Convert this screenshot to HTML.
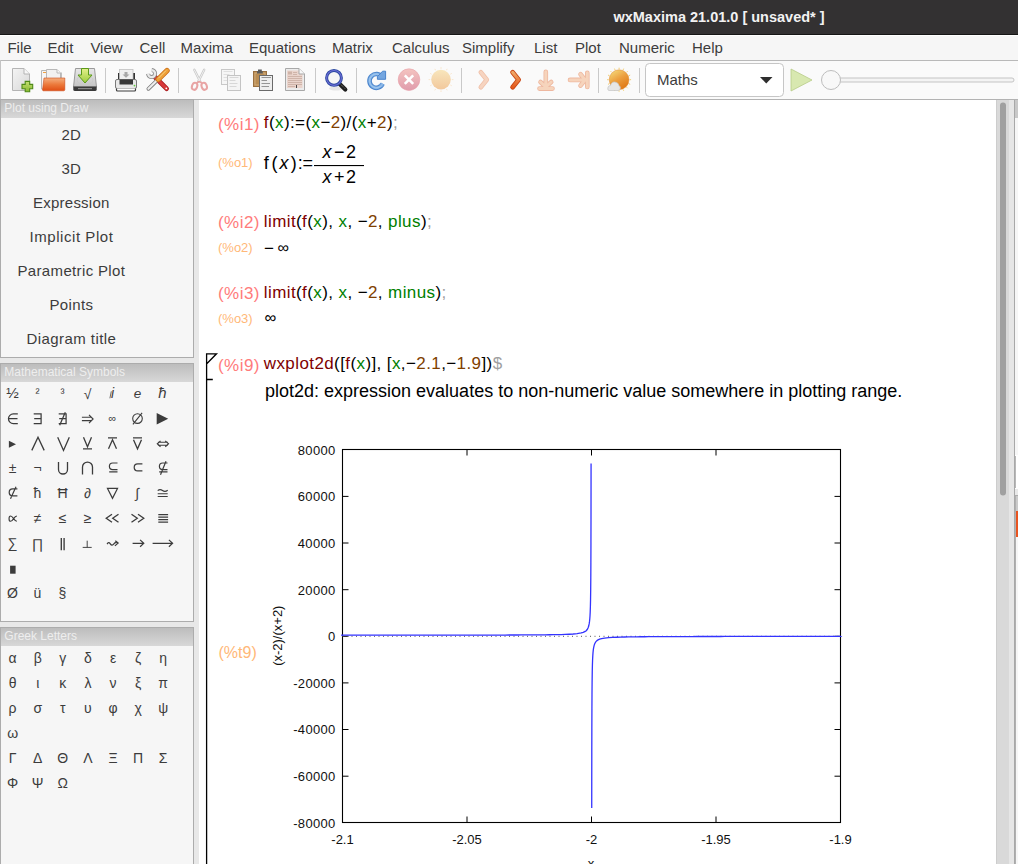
<!DOCTYPE html>
<html><head><meta charset="utf-8"><title>wxMaxima</title>
<style>html,body{margin:0;padding:0;width:1018px;height:864px;overflow:hidden;background:#f6f6f6}svg{display:block}</style>
</head><body><svg width="1018" height="864" viewBox="0 0 1018 864">
<rect x="0" y="0" width="1018" height="864" fill="#f6f6f6"/>
<rect x="0" y="0" width="1018" height="34" fill="#333132"/>
<rect x="0" y="34" width="1018" height="1" fill="#161616"/>
<rect x="0" y="35" width="1018" height="1" fill="#ffffff"/>
<text x="719" y="22" text-anchor="middle" style="font-family:'Liberation Sans',sans-serif;font-size:14.5px;font-weight:bold" fill="#f2f2f2">wxMaxima 21.01.0 [ unsaved* ]</text>
<text x="7.4" y="53" style="font-family:'Liberation Sans',sans-serif;font-size:15px" fill="#3c3c3c">File</text>
<text x="47.5" y="53" style="font-family:'Liberation Sans',sans-serif;font-size:15px" fill="#3c3c3c">Edit</text>
<text x="90.4" y="53" style="font-family:'Liberation Sans',sans-serif;font-size:15px" fill="#3c3c3c">View</text>
<text x="139.5" y="53" style="font-family:'Liberation Sans',sans-serif;font-size:15px" fill="#3c3c3c">Cell</text>
<text x="180.4" y="53" style="font-family:'Liberation Sans',sans-serif;font-size:15px" fill="#3c3c3c">Maxima</text>
<text x="249.0" y="53" style="font-family:'Liberation Sans',sans-serif;font-size:15px" fill="#3c3c3c">Equations</text>
<text x="332.0" y="53" style="font-family:'Liberation Sans',sans-serif;font-size:15px" fill="#3c3c3c">Matrix</text>
<text x="392.0" y="53" style="font-family:'Liberation Sans',sans-serif;font-size:15px" fill="#3c3c3c">Calculus</text>
<text x="462.0" y="53" style="font-family:'Liberation Sans',sans-serif;font-size:15px" fill="#3c3c3c">Simplify</text>
<text x="534.0" y="53" style="font-family:'Liberation Sans',sans-serif;font-size:15px" fill="#3c3c3c">List</text>
<text x="575.0" y="53" style="font-family:'Liberation Sans',sans-serif;font-size:15px" fill="#3c3c3c">Plot</text>
<text x="619.0" y="53" style="font-family:'Liberation Sans',sans-serif;font-size:15px" fill="#3c3c3c">Numeric</text>
<text x="692.0" y="53" style="font-family:'Liberation Sans',sans-serif;font-size:15px" fill="#3c3c3c">Help</text>
<rect x="0" y="60" width="1018" height="1" fill="#b9b9b9"/>
<rect x="1" y="61" width="1017" height="38" fill="#fafafa"/>
<rect x="0" y="60" width="1" height="40" fill="#c4c4c4"/>
<rect x="0" y="99" width="1018" height="1" fill="#b3b3b3"/>
<rect x="105" y="68" width="1" height="25" fill="#c9c9c9"/>
<rect x="178" y="68" width="1" height="25" fill="#c9c9c9"/>
<rect x="315" y="68" width="1" height="25" fill="#c9c9c9"/>
<rect x="356" y="68" width="1" height="25" fill="#c9c9c9"/>
<rect x="461" y="68" width="1" height="25" fill="#c9c9c9"/>
<rect x="598" y="68" width="1" height="25" fill="#c9c9c9"/>
<rect x="639" y="68" width="1" height="25" fill="#c9c9c9"/>
<defs>
<linearGradient id="pg" x1="0" y1="0" x2="1" y2="1"><stop offset="0" stop-color="#f4f4f4"/><stop offset="1" stop-color="#d8d8d8"/></linearGradient>
<linearGradient id="plusg" x1="0" y1="0" x2="0" y2="1"><stop offset="0" stop-color="#c4e070"/><stop offset="1" stop-color="#88b830"/></linearGradient>
<linearGradient id="fold" x1="0" y1="0" x2="0" y2="1"><stop offset="0" stop-color="#f4b080"/><stop offset="0.5" stop-color="#ec7a3c"/><stop offset="1" stop-color="#e04e14"/></linearGradient>
<linearGradient id="drv" x1="0" y1="0" x2="0" y2="1"><stop offset="0" stop-color="#e8e8e8"/><stop offset="1" stop-color="#c4c4c4"/></linearGradient>
<linearGradient id="arrg" x1="0" y1="0" x2="0" y2="1"><stop offset="0" stop-color="#e4f08c"/><stop offset="1" stop-color="#9ccc3c"/></linearGradient>
<linearGradient id="xg" x1="0" y1="0" x2="0" y2="1"><stop offset="0" stop-color="#f4c4c0"/><stop offset="1" stop-color="#e09cac"/></linearGradient>
<linearGradient id="sung" x1="0" y1="0" x2="0" y2="1"><stop offset="0" stop-color="#f8e6bc"/><stop offset="1" stop-color="#f2c89c"/></linearGradient>
<linearGradient id="sun2" x1="0.2" y1="0" x2="0.8" y2="1"><stop offset="0" stop-color="#f4d878"/><stop offset="0.45" stop-color="#eca040"/><stop offset="1" stop-color="#de7410"/></linearGradient>
<linearGradient id="chev2" x1="0" y1="0" x2="0" y2="1"><stop offset="0" stop-color="#f0a868"/><stop offset="1" stop-color="#e45a1c"/></linearGradient>
<linearGradient id="refg" x1="0" y1="0" x2="1" y2="1"><stop offset="0" stop-color="#78b0e8"/><stop offset="1" stop-color="#3c7cc8"/></linearGradient>
</defs>
<path d="M12.5 68.5 H24 L29.5 74 V90.5 H12.5 Z" fill="url(#pg)" stroke="#b4b4b4" stroke-width="1"/>
<path d="M24 68.5 V74 H29.5" fill="#f8f8f8" stroke="#b4b4b4" stroke-width="1"/>
<path d="M25.2 81.4 h4.5 v3 h3 v4.3 h-3 v3 h-4.5 v-3 h-3.2 v-4.3 h3.2 Z" fill="url(#plusg)" stroke="#4f8a18" stroke-width="1.1"/>
<path d="M41.5 70.5 H50 V89 H41.5 Z" fill="#f6f6f6" stroke="#b8b8b8" stroke-width="1"/>
<rect x="43" y="72" width="3" height="1" fill="#f0a040"/>
<path d="M46.5 69.5 H57 L60.5 73 V84 H46.5 Z" fill="#f2f2f2" stroke="#b8b8b8" stroke-width="1"/>
<path d="M57 69.5 V73 H60.5" fill="#fafafa" stroke="#b8b8b8" stroke-width="1"/>
<path d="M61 72.5 H62 V78 H61 Z" fill="#c0c0c0"/>
<path d="M44 78 H64.8 V89.5 Q64.8 90.8 63.5 90.8 H43 L42.5 90 Z" fill="url(#fold)" stroke="#cc4a18" stroke-width="0.6"/>
<path d="M75.5 68.5 H94.5 L96.5 87 H73.5 Z" fill="url(#drv)" stroke="#9a9a9a" stroke-width="1"/>
<ellipse cx="85" cy="80" rx="8" ry="5" fill="none" stroke="#c8c8c8" stroke-width="0.8"/>
<path d="M73.3 86.5 H96.7 V89.5 Q96.7 91 95 91 H75 Q73.3 91 73.3 89.5 Z" fill="#3a3a3a"/>
<rect x="78" y="88" width="14" height="1.2" fill="#888"/>
<path d="M81.5 68.5 H88.5 V75 H92 L85 83 L78 75 H81.5 Z" fill="url(#arrg)" stroke="#5a9a18" stroke-width="1"/>
<rect x="118" y="73" width="17" height="7" fill="#333"/>
<rect x="119.5" y="69.5" width="13.5" height="10" fill="#f0f0f0" stroke="#c0c0c0" stroke-width="0.8"/>
<path d="M124.5 72 h3 v2.5 h2 l-3.5 3.3 l-3.5 -3.3 h2 Z" fill="#a8a8a8"/>
<rect x="115.5" y="79.5" width="21" height="9" rx="1.5" fill="#e8e8e8" stroke="#7a7a7a" stroke-width="1"/>
<rect x="119.5" y="79.5" width="13.5" height="5" fill="#383838"/>
<circle cx="134.5" cy="85.6" r="0.9" fill="#60d040"/>
<path d="M116.5 88.5 V90 Q116.5 91 117.5 91 H134.5 Q135.5 91 135.5 90 V88.5" fill="#fff" stroke="#3a3a3a" stroke-width="1.2"/>
<path d="M155.2 77.3 L166.6 88.6" stroke="#a81c20" stroke-width="4.8" stroke-linecap="round"/>
<path d="M155.2 77.3 L166.6 88.6" stroke="#d8383a" stroke-width="3.2" stroke-linecap="round"/>
<circle cx="166.3" cy="88.3" r="0.9" fill="#fff"/>
<path d="M151.8 70.1 A3.5 3.5 0 1 1 148.1 73.8" fill="none" stroke="#8c8c8c" stroke-width="4.0" stroke-linecap="butt"/>
<path d="M151.8 70.1 A3.5 3.5 0 1 1 148.1 73.8" fill="none" stroke="#eaeaea" stroke-width="2.3" stroke-linecap="butt"/>
<path d="M157.6 79.8 L148.4 88.8" stroke="#7c7c7c" stroke-width="3.8" stroke-linecap="round"/>
<path d="M157.6 79.8 L148.4 88.8" stroke="#eeeeee" stroke-width="2.2" stroke-linecap="round"/>
<path d="M167 70.6 L158.2 79.4" stroke="#c86c18" stroke-width="5.4" stroke-linecap="round"/>
<path d="M167 70.6 L158.2 79.4" stroke="#eea038" stroke-width="3.8" stroke-linecap="round"/>
<path d="M165.8 70.8 L158.6 78" stroke="#f6d488" stroke-width="1" stroke-linecap="round"/>
<path d="M194.3 69.8 L200.2 81.5 M204.2 69.8 L198.3 81.5" stroke="#c8c8c8" stroke-width="2.4" stroke-linecap="round"/>
<path d="M194.3 69.8 L200.2 81.5 M204.2 69.8 L198.3 81.5" stroke="#f2f2f2" stroke-width="1" stroke-linecap="round"/>
<ellipse cx="194.6" cy="86.3" rx="2.6" ry="3.6" transform="rotate(20 194.6 86.3)" fill="none" stroke="#e8a4a4" stroke-width="2"/>
<ellipse cx="204.2" cy="86.3" rx="2.6" ry="3.6" transform="rotate(-20 204.2 86.3)" fill="none" stroke="#e8a4a4" stroke-width="2"/>
<path d="M199.2 81.5 L196.5 83 M199.2 81.5 L202 83" stroke="#e8a4a4" stroke-width="1.6"/>
<rect x="221.5" y="69.5" width="13" height="15" fill="#f6f6f6" stroke="#c8c8c8" stroke-width="1"/>
<path d="M223.5 71.5 h9 M223.5 74.5 h6 M223.5 77.5 h6 M223.5 80.5 h6" stroke="#dcdcdc" stroke-width="0.9"/>
<rect x="227.5" y="75.5" width="13" height="15" fill="#f4f4f4" stroke="#c4c4c4" stroke-width="1"/>
<path d="M229.5 77.5 h9 M229.5 80.5 h6 M229.5 83.5 h8 M229.5 86.5 h7" stroke="#d4d4d4" stroke-width="0.9"/>
<rect x="253.5" y="71.5" width="13" height="15" fill="#b98c52" stroke="#9a7040" stroke-width="1"/>
<rect x="255" y="73" width="10" height="12" fill="none" stroke="#d2b080" stroke-width="0.8"/>
<path d="M258 69.5 h3.8 v1.8 h1 v2.3 h-5.8 v-2.3 h1 Z" fill="#5a5a5a"/>
<rect x="259.5" y="75.5" width="13" height="15" fill="#eeeeee" stroke="#6a6a6a" stroke-width="1"/>
<path d="M261.5 77.5 h9.5 M261.5 80.5 h5.5 M261.5 83.5 h8.5 M261.5 86.5 h7.5" stroke="#8a8a8a" stroke-width="0.9"/>
<path d="M285.5 68.5 H299 L304.5 74 V90.5 H285.5 Z" fill="#ececec" stroke="#a8a8a8" stroke-width="1"/>
<path d="M287 70.5 H299 V74 H302.5 V88 H287 Z" fill="#ead4cc"/>
<path d="M299 68.5 V74 H304.5" fill="#f8f8f8" stroke="#a8a8a8" stroke-width="1"/>
<rect x="288" y="71.5" width="4" height="3" fill="#d0b4a8"/>
<path d="M293 72.5 h4 M293 74.5 h4 M288 76.5 h14 M288 78.5 h14 M288 80.5 h14 M288 82.5 h14 M288 84.5 h14 M288 86.5 h7" stroke="#c8aca0" stroke-width="0.8"/>
<rect x="296" y="85" width="1" height="3" fill="#444"/>
<ellipse cx="336" cy="88.5" rx="7" ry="2" fill="#000" opacity="0.08"/>
<path d="M339.2 83.6 L345.3 89.6" stroke="#1e1e1e" stroke-width="4.2" stroke-linecap="round"/>
<path d="M340 83.6 L345 88.6" stroke="#8a8a80" stroke-width="1" stroke-dasharray="1 1"/>
<circle cx="334" cy="77.9" r="6" fill="#f6f6f6"/>
<circle cx="334" cy="77.9" r="7.4" fill="none" stroke="#2a48a0" stroke-width="3"/>
<circle cx="334" cy="77.9" r="7.4" fill="none" stroke="#6c6cd4" stroke-width="1.2"/>
<path d="M382.05 76.94 A6.9 6.9 0 1 0 382.65 83.82" fill="none" stroke="#4a84cc" stroke-width="4.6"/>
<path d="M382.05 76.94 A6.9 6.9 0 1 0 382.65 83.82" fill="none" stroke="#86b6e8" stroke-width="2.6"/>
<path d="M382.05 76.94 A6.9 6.9 0 1 0 382.65 83.82" fill="none" stroke="#a8ccf0" stroke-width="0.8"/>
<path d="M382.65 83.82 A6.9 6.9 0 0 0 380.84 86.19" fill="none" stroke="#80b0e4" stroke-width="4.4" opacity="0.45"/>
<path d="M382.6 71.2 L385.6 71.2 L385.6 79.3 L377.4 79.3 L377.4 76.6 Z" fill="#74a6e0" stroke="#4a84cc" stroke-width="1" stroke-linejoin="round"/>
<circle cx="409" cy="79.6" r="10.8" fill="url(#xg)" stroke="#e8a0a8" stroke-width="0.6"/>
<path d="M404.8 75.4 L413.2 83.8 M413.2 75.4 L404.8 83.8" stroke="#ffffff" stroke-width="2.6"/>
<g stroke="#f8e0c0" stroke-width="0.8"><path d="M441 79.6 m10.80 0.00 l1.60 0.00"/><path d="M441 79.6 m9.35 5.40 l1.39 0.80"/><path d="M441 79.6 m5.40 9.35 l0.80 1.39"/><path d="M441 79.6 m0.00 10.80 l0.00 1.60"/><path d="M441 79.6 m-5.40 9.35 l-0.80 1.39"/><path d="M441 79.6 m-9.35 5.40 l-1.39 0.80"/><path d="M441 79.6 m-10.80 0.00 l-1.60 0.00"/><path d="M441 79.6 m-9.35 -5.40 l-1.39 -0.80"/><path d="M441 79.6 m-5.40 -9.35 l-0.80 -1.39"/><path d="M441 79.6 m-0.00 -10.80 l-0.00 -1.60"/><path d="M441 79.6 m5.40 -9.35 l0.80 -1.39"/><path d="M441 79.6 m9.35 -5.40 l1.39 -0.80"/></g>
<circle cx="441" cy="79.6" r="9.8" fill="url(#sung)"/>
<path d="M480.8 72.3 L486.8 79.7 L480.8 87.2" fill="none" stroke="#f0c0a8" stroke-width="4.6" stroke-linecap="round" stroke-linejoin="round"/>
<path d="M480.8 72.3 L486.8 79.7 L480.8 87.2" fill="none" stroke="#f6d4c0" stroke-width="3" stroke-linecap="round" stroke-linejoin="round"/>
<path d="M512.6 72.3 L518.6 79.7 L512.6 87.2" fill="none" stroke="#c84412" stroke-width="4.8" stroke-linecap="round" stroke-linejoin="round"/>
<path d="M512.6 72.3 L518.6 79.7 L512.6 87.2" fill="none" stroke="url(#chev2)" stroke-width="3" stroke-linecap="round" stroke-linejoin="round"/>
<path d="M545.8 71.8 V86.5 M540.5 82 L545.8 87 L551.2 82 M539.5 88.6 H552.5" fill="none" stroke="#eeb8a0" stroke-width="4.6" stroke-linecap="round" stroke-linejoin="round"/>
<path d="M545.8 71.8 V86.5 M540.5 82 L545.8 87 L551.2 82 M539.5 88.6 H552.5" fill="none" stroke="#f6d4bc" stroke-width="3" stroke-linecap="round" stroke-linejoin="round"/>
<path d="M570 79.9 H584 M580.5 74.2 L585 79.9 L580.5 85.6 M587.3 72.8 V87" fill="none" stroke="#eeb8a0" stroke-width="4.6" stroke-linecap="round" stroke-linejoin="round"/>
<path d="M570 79.9 H584 M580.5 74.2 L585 79.9 L580.5 85.6 M587.3 72.8 V87" fill="none" stroke="#f6d4bc" stroke-width="3" stroke-linecap="round" stroke-linejoin="round"/>
<g stroke="#f0c860" stroke-width="0.9"><path d="M619.1 79.7 m10.60 0.00 l1.40 0.00"/><path d="M619.1 79.7 m9.79 4.06 l1.29 0.54"/><path d="M619.1 79.7 m7.50 7.50 l0.99 0.99"/><path d="M619.1 79.7 m4.06 9.79 l0.54 1.29"/><path d="M619.1 79.7 m0.00 10.60 l0.00 1.40"/><path d="M619.1 79.7 m-4.06 9.79 l-0.54 1.29"/><path d="M619.1 79.7 m-7.50 7.50 l-0.99 0.99"/><path d="M619.1 79.7 m-9.79 4.06 l-1.29 0.54"/><path d="M619.1 79.7 m-10.60 0.00 l-1.40 0.00"/><path d="M619.1 79.7 m-9.79 -4.06 l-1.29 -0.54"/><path d="M619.1 79.7 m-7.50 -7.50 l-0.99 -0.99"/><path d="M619.1 79.7 m-4.06 -9.79 l-0.54 -1.29"/><path d="M619.1 79.7 m-0.00 -10.60 l-0.00 -1.40"/><path d="M619.1 79.7 m4.06 -9.79 l0.54 -1.29"/><path d="M619.1 79.7 m7.50 -7.50 l0.99 -0.99"/><path d="M619.1 79.7 m9.79 -4.06 l1.29 -0.54"/></g>
<circle cx="619.1" cy="79.7" r="9.9" fill="url(#sun2)" stroke="#e08a30" stroke-width="0.5"/>
<path d="M609 90.5 Q607.5 90.5 607.8 88 Q608 85.5 610.5 85.5 Q611.5 81.5 615 82 Q618.5 82.5 619 85.5 Q621 86.5 620.2 89 Q619.8 90.5 618 90.5 Z" fill="#e6e6e6" stroke="#c4c4c4" stroke-width="0.7"/>
<rect x="645.5" y="63.5" width="138" height="33" rx="4" fill="#ffffff" stroke="#c6c6c6"/>
<text x="657" y="85" style="font-family:'Liberation Sans',sans-serif;font-size:15px" fill="#3c3c3c">Maths</text>
<path d="M760 77 L772.5 77 L766.25 83.5 Z" fill="#2e2e2e"/>
<path d="M791 69 L812 80 L791 91 Z" fill="#d8e8b0" stroke="#b8cc88" stroke-width="0.8"/>
<rect x="838" y="78" width="176" height="4" rx="2" fill="#f4f4f4" stroke="#c4c4c4" stroke-width="1"/>
<circle cx="831" cy="80" r="9.5" fill="#f8f8f8" stroke="#bdbdbd" stroke-width="1"/>
<rect x="0" y="100" width="199" height="764" fill="#e8e8e8"/>
<rect x="0.5" y="99.5" width="193" height="258" fill="#f6f6f6" stroke="#acacac" stroke-width="1"/>
<defs><linearGradient id="g99" x1="0" y1="0" x2="0" y2="1"><stop offset="0" stop-color="#bdbdbd"/><stop offset="1" stop-color="#d8d8d8"/></linearGradient></defs>
<rect x="1" y="100" width="192" height="18" fill="url(#g99)"/>
<text x="4.3" y="111.8" style="font-family:'Liberation Sans',sans-serif;font-size:12px" fill="#eeeeee">Plot using Draw</text>
<rect x="0.5" y="363.5" width="193" height="258" fill="#f6f6f6" stroke="#acacac" stroke-width="1"/>
<defs><linearGradient id="g363" x1="0" y1="0" x2="0" y2="1"><stop offset="0" stop-color="#bdbdbd"/><stop offset="1" stop-color="#d8d8d8"/></linearGradient></defs>
<rect x="1" y="364" width="192" height="18" fill="url(#g363)"/>
<text x="4.3" y="375.8" style="font-family:'Liberation Sans',sans-serif;font-size:12px" fill="#eeeeee">Mathematical Symbols</text>
<rect x="0.5" y="627.5" width="193" height="273" fill="#f6f6f6" stroke="#acacac" stroke-width="1"/>
<defs><linearGradient id="g627" x1="0" y1="0" x2="0" y2="1"><stop offset="0" stop-color="#bdbdbd"/><stop offset="1" stop-color="#d8d8d8"/></linearGradient></defs>
<rect x="1" y="628" width="192" height="18" fill="url(#g627)"/>
<text x="4.3" y="639.8" style="font-family:'Liberation Sans',sans-serif;font-size:12px" fill="#eeeeee">Greek Letters</text>
<text x="71.30" y="139.7" text-anchor="middle" style="font-family:'Liberation Sans',sans-serif;font-size:15px;letter-spacing:0.2px" fill="#3c3c3c">2D</text>
<text x="71.30" y="173.7" text-anchor="middle" style="font-family:'Liberation Sans',sans-serif;font-size:15px;letter-spacing:0.2px" fill="#3c3c3c">3D</text>
<text x="71.31" y="207.7" text-anchor="middle" style="font-family:'Liberation Sans',sans-serif;font-size:15px;letter-spacing:0.23px" fill="#3c3c3c">Expression</text>
<text x="71.48" y="241.7" text-anchor="middle" style="font-family:'Liberation Sans',sans-serif;font-size:15px;letter-spacing:0.55px" fill="#3c3c3c">Implicit Plot</text>
<text x="71.38" y="275.7" text-anchor="middle" style="font-family:'Liberation Sans',sans-serif;font-size:15px;letter-spacing:0.35px" fill="#3c3c3c">Parametric Plot</text>
<text x="71.38" y="309.7" text-anchor="middle" style="font-family:'Liberation Sans',sans-serif;font-size:15px;letter-spacing:0.35px" fill="#3c3c3c">Points</text>
<text x="71.41" y="343.7" text-anchor="middle" style="font-family:'Liberation Sans',sans-serif;font-size:15px;letter-spacing:0.42px" fill="#3c3c3c">Diagram title</text>
<text x="12.5" y="398.3" text-anchor="middle" style="font-family:'Liberation Sans',sans-serif;font-size:15px;" fill="#3c3c3c">½</text>
<text x="37.5" y="397.3" text-anchor="middle" style="font-family:'Liberation Sans',sans-serif;font-size:12px;" fill="#3c3c3c">²</text>
<text x="62.5" y="397.3" text-anchor="middle" style="font-family:'Liberation Sans',sans-serif;font-size:12px;" fill="#3c3c3c">³</text>
<text x="87.5" y="398.8" text-anchor="middle" style="font-family:'Liberation Sans',sans-serif;font-size:14px;" fill="#3c3c3c">√</text>
<text x="112.5" y="398.3" text-anchor="middle" style="font-family:'Liberation Sans',sans-serif;font-size:14px;font-style:italic" fill="#3c3c3c">i</text>
<path transform="translate(112.5 393.3)" d="M-1.2 -2 L-2.6 5" fill="none" stroke="#3c3c3c" stroke-width="0.75" stroke-linecap="butt" stroke-linejoin="miter"/>
<text x="137.5" y="398.1" text-anchor="middle" style="font-family:'Liberation Sans',sans-serif;font-size:13.5px;font-style:italic" fill="#3c3c3c">e</text>
<text x="162.5" y="398.3" text-anchor="middle" style="font-family:'Liberation Sans',sans-serif;font-size:15px;font-style:italic" fill="#3c3c3c">ħ</text>
<path transform="translate(12.5 418.3)" d="M5.3 -4.4 H0.8 A4.85 4.85 0 0 0 0.8 5.3 H5.3 M-4.3 0.45 H5" fill="none" stroke="#3c3c3c" stroke-width="1.25" stroke-linecap="butt" stroke-linejoin="miter"/>
<path transform="translate(37.5 418.3)" d="M-3.8 -4.4 H3.6 V5.3 H-3.8 M-3.3 0.45 H3.6" fill="none" stroke="#3c3c3c" stroke-width="1.25" stroke-linecap="butt" stroke-linejoin="miter"/>
<path transform="translate(62.5 418.3)" d="M-3.8 -4.4 H3.6 V5.3 H-3.8 M-3.3 0.45 H3.6 M2.8 -6 L-2.8 7" fill="none" stroke="#3c3c3c" stroke-width="1.25" stroke-linecap="butt" stroke-linejoin="miter"/>
<path transform="translate(87.5 418.3)" d="M-5.6 -1 H3.5 M-5.6 2.4 H3.5 M1.5 -3.5 L5.6 0.7 L1.5 4.9" fill="none" stroke="#3c3c3c" stroke-width="1.15" stroke-linecap="butt" stroke-linejoin="miter"/>
<text x="112.5" y="422.3" text-anchor="middle" style="font-family:'Liberation Sans',sans-serif;font-size:11px;" fill="#3c3c3c">∞</text>
<path transform="translate(137.5 418.3)" d="M0 -4.5 A4.8 4.8 0 1 1 0 5.1 A4.8 4.8 0 1 1 0 -4.5 M4.6 -5.5 L-4.6 6.1" fill="none" stroke="#3c3c3c" stroke-width="1.0999999999999999" stroke-linecap="butt" stroke-linejoin="miter"/>
<path transform="translate(162.5 418.3)" d="M-5.8 -5.3 L5.7 0.45 L-5.8 6.2 Z" fill="#3c3c3c"/>
<path transform="translate(12.5 443.3)" d="M-3.6 -2.6 L3.5 0.9 L-3.6 4.4 Z" fill="#3c3c3c"/>
<path transform="translate(37.5 443.3)" d="M-5.7 7.1 L0.5 -6.1 L6.7 7.1" fill="none" stroke="#3c3c3c" stroke-width="1.2999999999999998" stroke-linecap="butt" stroke-linejoin="miter"/>
<path transform="translate(62.5 443.3)" d="M-4.8 -6.1 L1 7.1 L6.8 -6.1" fill="none" stroke="#3c3c3c" stroke-width="1.2999999999999998" stroke-linecap="butt" stroke-linejoin="miter"/>
<path transform="translate(87.5 443.3)" d="M-4 -6 L0 3.5 L4 -6 M-4.5 5.5 H4.5" fill="none" stroke="#3c3c3c" stroke-width="1.2999999999999998" stroke-linecap="butt" stroke-linejoin="miter"/>
<path transform="translate(112.5 443.3)" d="M-4 5.5 L0 -3.5 L4 5.5 M-4.5 -5.5 H4.5" fill="none" stroke="#3c3c3c" stroke-width="1.2999999999999998" stroke-linecap="butt" stroke-linejoin="miter"/>
<path transform="translate(137.5 443.3)" d="M-4 -3.5 L0 5.5 L4 -3.5 M-4.5 -5.5 H4.5" fill="none" stroke="#3c3c3c" stroke-width="1.2999999999999998" stroke-linecap="butt" stroke-linejoin="miter"/>
<path transform="translate(162.5 443.3)" d="M-2 -2.4 L-5.2 0.5 L-2 3.4 M2.8 -2.4 L6 0.5 L2.8 3.4 M-4.6 -1 H5.4 M-4.6 2 H5.4" fill="none" stroke="#3c3c3c" stroke-width="1.15" stroke-linecap="butt" stroke-linejoin="miter"/>
<text x="12.5" y="473.3" text-anchor="middle" style="font-family:'Liberation Sans',sans-serif;font-size:14px;" fill="#3c3c3c">±</text>
<text x="37.5" y="473.3" text-anchor="middle" style="font-family:'Liberation Sans',sans-serif;font-size:14px;" fill="#3c3c3c">¬</text>
<path transform="translate(62.5 468.3)" d="M-4 -6.3 V1.2 A4.5 4.5 0 0 0 5 1.2 V-6.3" fill="none" stroke="#3c3c3c" stroke-width="1.2999999999999998" stroke-linecap="butt" stroke-linejoin="miter"/>
<path transform="translate(87.5 468.3)" d="M-5 6.2 V-1.2 A5 5 0 0 1 5 -1.2 V6.2" fill="none" stroke="#3c3c3c" stroke-width="1.2999999999999998" stroke-linecap="butt" stroke-linejoin="miter"/>
<path transform="translate(112.5 468.3)" d="M5 -5.3 H0.2 A3.3 3.3 0 0 0 0.2 1.3 H5 M-3.3 3.6 H5" fill="none" stroke="#3c3c3c" stroke-width="1.2" stroke-linecap="butt" stroke-linejoin="miter"/>
<path transform="translate(137.5 468.3)" d="M4.9 -4.4 H0.2 A3.5 3.5 0 0 0 0.2 2.6 H4.9" fill="none" stroke="#3c3c3c" stroke-width="1.2" stroke-linecap="butt" stroke-linejoin="miter"/>
<path transform="translate(162.5 468.3)" d="M5 -5.3 H0.2 A3.3 3.3 0 0 0 0.2 1.3 H5 M-3.3 3.6 H5 M3.5 -7 L-2 6.5" fill="none" stroke="#3c3c3c" stroke-width="1.2" stroke-linecap="butt" stroke-linejoin="miter"/>
<path transform="translate(12.5 493.3)" d="M4.9 -4.4 H0.2 A3.5 3.5 0 0 0 0.2 2.6 H4.9 M3.5 -6.5 L-2 5.5" fill="none" stroke="#3c3c3c" stroke-width="1.2" stroke-linecap="butt" stroke-linejoin="miter"/>
<text x="37.5" y="498.3" text-anchor="middle" style="font-family:'Liberation Sans',sans-serif;font-size:14px;" fill="#3c3c3c">ħ</text>
<text x="62.5" y="498.3" text-anchor="middle" style="font-family:'Liberation Sans',sans-serif;font-size:14px;" fill="#3c3c3c">Ħ</text>
<text x="87.5" y="498.3" text-anchor="middle" style="font-family:'Liberation Sans',sans-serif;font-size:14px;" fill="#3c3c3c">∂</text>
<path transform="translate(112.5 493.3)" d="M-5 -4.8 H5 L0 5 Z" fill="none" stroke="#3c3c3c" stroke-width="1.25" stroke-linecap="butt" stroke-linejoin="miter"/>
<text x="137.5" y="498.3" text-anchor="middle" style="font-family:'Liberation Sans',sans-serif;font-size:14px;" fill="#3c3c3c">∫</text>
<path transform="translate(162.5 493.3)" d="M-4.8 -2.6 Q-2.5 -4.8 0 -2.8 Q2.5 -0.8 5.2 -3 M-4.8 0.5 H5.2 M-4.8 3.2 H5.2" fill="none" stroke="#3c3c3c" stroke-width="1.15" stroke-linecap="butt" stroke-linejoin="miter"/>
<path transform="translate(12.5 518.3)" d="M4.4 -2.3 C1.5 -2.3 0.5 3 -1.8 3 C-4 3 -4 -2.3 -1.8 -2.3 C0.5 -2.3 1.5 3 4.4 3" fill="none" stroke="#3c3c3c" stroke-width="1.15" stroke-linecap="butt" stroke-linejoin="miter"/>
<text x="37.5" y="523.3" text-anchor="middle" style="font-family:'Liberation Sans',sans-serif;font-size:14px;" fill="#3c3c3c">≠</text>
<text x="62.5" y="523.3" text-anchor="middle" style="font-family:'Liberation Sans',sans-serif;font-size:14px;" fill="#3c3c3c">≤</text>
<text x="87.5" y="523.3" text-anchor="middle" style="font-family:'Liberation Sans',sans-serif;font-size:14px;" fill="#3c3c3c">≥</text>
<path transform="translate(112.5 518.3)" d="M-0.5 -4 L-6.3 0 L-0.5 4 M6 -4 L0.2 0 L6 4" fill="none" stroke="#3c3c3c" stroke-width="1.2999999999999998" stroke-linecap="butt" stroke-linejoin="miter"/>
<path transform="translate(137.5 518.3)" d="M0.5 -4 L6.3 0 L0.5 4 M-6 -4 L-0.2 0 L-6 4" fill="none" stroke="#3c3c3c" stroke-width="1.2999999999999998" stroke-linecap="butt" stroke-linejoin="miter"/>
<path transform="translate(162.5 518.3)" d="M-4.2 -3.6 H5.6 M-4.2 -1.1 H5.6 M-4.2 1.4 H5.6 M-4.2 3.9 H5.6" fill="none" stroke="#3c3c3c" stroke-width="1.25" stroke-linecap="butt" stroke-linejoin="miter"/>
<text x="12.5" y="548.3" text-anchor="middle" style="font-family:'Liberation Sans',sans-serif;font-size:14px;" fill="#3c3c3c">∑</text>
<text x="37.5" y="548.8" text-anchor="middle" style="font-family:'Liberation Sans',sans-serif;font-size:14px;" fill="#3c3c3c">∏</text>
<path transform="translate(62.5 543.3)" d="M-1.2 -5.3 V7 M1.6 -5.3 V7" fill="none" stroke="#3c3c3c" stroke-width="1.3499999999999999" stroke-linecap="butt" stroke-linejoin="miter"/>
<path transform="translate(87.5 543.3)" d="M-4.8 4.1 H4.2 M-0.3 -2.6 V4.1" fill="none" stroke="#3c3c3c" stroke-width="0.9500000000000001" stroke-linecap="butt" stroke-linejoin="miter"/>
<path transform="translate(112.5 543.3)" d="M-5.4 0.8 Q-4 -2 -2.2 0.5 Q-0.5 3 1.4 0.5 Q2.5 -1 4 -0.5 M2.8 -2.6 L5.6 -0.2 L2.4 2.6" fill="none" stroke="#3c3c3c" stroke-width="1.25" stroke-linecap="butt" stroke-linejoin="miter"/>
<path transform="translate(137.5 543.3)" d="M-4.9 0 H6 M2.6 -3.4 L6.3 0 L2.6 3.4" fill="none" stroke="#3c3c3c" stroke-width="1.2" stroke-linecap="butt" stroke-linejoin="miter"/>
<path transform="translate(162.5 543.3)" d="M-9.9 0 H9.8 M6.4 -3.4 L10.1 0 L6.4 3.4" fill="none" stroke="#3c3c3c" stroke-width="1.2" stroke-linecap="butt" stroke-linejoin="miter"/>
<rect x="10.1" y="565.7" width="5.5" height="8" fill="#3c3c3c"/>
<text x="12.5" y="598.3" text-anchor="middle" style="font-family:'Liberation Sans',sans-serif;font-size:14px;" fill="#3c3c3c">Ø</text>
<text x="37.5" y="598.3" text-anchor="middle" style="font-family:'Liberation Sans',sans-serif;font-size:14px;" fill="#3c3c3c">ü</text>
<text x="62.5" y="598.3" text-anchor="middle" style="font-family:'Liberation Sans',sans-serif;font-size:14px;" fill="#3c3c3c">§</text>
<text x="12.6" y="663" text-anchor="middle" style="font-family:'Liberation Sans',sans-serif;font-size:14px" fill="#3c3c3c">α</text>
<text x="37.7" y="663" text-anchor="middle" style="font-family:'Liberation Sans',sans-serif;font-size:14px" fill="#3c3c3c">β</text>
<text x="62.8" y="663" text-anchor="middle" style="font-family:'Liberation Sans',sans-serif;font-size:14px" fill="#3c3c3c">γ</text>
<text x="87.9" y="663" text-anchor="middle" style="font-family:'Liberation Sans',sans-serif;font-size:14px" fill="#3c3c3c">δ</text>
<text x="113.0" y="663" text-anchor="middle" style="font-family:'Liberation Sans',sans-serif;font-size:14px" fill="#3c3c3c">ε</text>
<text x="138.1" y="663" text-anchor="middle" style="font-family:'Liberation Sans',sans-serif;font-size:14px" fill="#3c3c3c">ζ</text>
<text x="163.2" y="663" text-anchor="middle" style="font-family:'Liberation Sans',sans-serif;font-size:14px" fill="#3c3c3c">η</text>
<text x="12.6" y="688" text-anchor="middle" style="font-family:'Liberation Sans',sans-serif;font-size:14px" fill="#3c3c3c">θ</text>
<text x="37.7" y="688" text-anchor="middle" style="font-family:'Liberation Sans',sans-serif;font-size:14px" fill="#3c3c3c">ι</text>
<text x="62.8" y="688" text-anchor="middle" style="font-family:'Liberation Sans',sans-serif;font-size:14px" fill="#3c3c3c">κ</text>
<text x="87.9" y="688" text-anchor="middle" style="font-family:'Liberation Sans',sans-serif;font-size:14px" fill="#3c3c3c">λ</text>
<text x="113.0" y="688" text-anchor="middle" style="font-family:'Liberation Sans',sans-serif;font-size:14px" fill="#3c3c3c">ν</text>
<text x="138.1" y="688" text-anchor="middle" style="font-family:'Liberation Sans',sans-serif;font-size:14px" fill="#3c3c3c">ξ</text>
<text x="163.2" y="688" text-anchor="middle" style="font-family:'Liberation Sans',sans-serif;font-size:14px" fill="#3c3c3c">π</text>
<text x="12.6" y="713" text-anchor="middle" style="font-family:'Liberation Sans',sans-serif;font-size:14px" fill="#3c3c3c">ρ</text>
<text x="37.7" y="713" text-anchor="middle" style="font-family:'Liberation Sans',sans-serif;font-size:14px" fill="#3c3c3c">σ</text>
<text x="62.8" y="713" text-anchor="middle" style="font-family:'Liberation Sans',sans-serif;font-size:14px" fill="#3c3c3c">τ</text>
<text x="87.9" y="713" text-anchor="middle" style="font-family:'Liberation Sans',sans-serif;font-size:14px" fill="#3c3c3c">υ</text>
<text x="113.0" y="713" text-anchor="middle" style="font-family:'Liberation Sans',sans-serif;font-size:14px" fill="#3c3c3c">φ</text>
<text x="138.1" y="713" text-anchor="middle" style="font-family:'Liberation Sans',sans-serif;font-size:14px" fill="#3c3c3c">χ</text>
<text x="163.2" y="713" text-anchor="middle" style="font-family:'Liberation Sans',sans-serif;font-size:14px" fill="#3c3c3c">ψ</text>
<text x="12.6" y="738" text-anchor="middle" style="font-family:'Liberation Sans',sans-serif;font-size:14px" fill="#3c3c3c">ω</text>
<text x="12.6" y="763" text-anchor="middle" style="font-family:'Liberation Sans',sans-serif;font-size:14px" fill="#3c3c3c">Γ</text>
<text x="37.7" y="763" text-anchor="middle" style="font-family:'Liberation Sans',sans-serif;font-size:14px" fill="#3c3c3c">Δ</text>
<text x="62.8" y="763" text-anchor="middle" style="font-family:'Liberation Sans',sans-serif;font-size:14px" fill="#3c3c3c">Θ</text>
<text x="87.9" y="763" text-anchor="middle" style="font-family:'Liberation Sans',sans-serif;font-size:14px" fill="#3c3c3c">Λ</text>
<text x="113.0" y="763" text-anchor="middle" style="font-family:'Liberation Sans',sans-serif;font-size:14px" fill="#3c3c3c">Ξ</text>
<text x="138.1" y="763" text-anchor="middle" style="font-family:'Liberation Sans',sans-serif;font-size:14px" fill="#3c3c3c">Π</text>
<text x="163.2" y="763" text-anchor="middle" style="font-family:'Liberation Sans',sans-serif;font-size:14px" fill="#3c3c3c">Σ</text>
<text x="12.6" y="788" text-anchor="middle" style="font-family:'Liberation Sans',sans-serif;font-size:14px" fill="#3c3c3c">Φ</text>
<text x="37.7" y="788" text-anchor="middle" style="font-family:'Liberation Sans',sans-serif;font-size:14px" fill="#3c3c3c">Ψ</text>
<text x="62.8" y="788" text-anchor="middle" style="font-family:'Liberation Sans',sans-serif;font-size:14px" fill="#3c3c3c">Ω</text>
<rect x="199" y="100" width="797" height="764" fill="#ffffff"/>
<rect x="996" y="100" width="13" height="764" fill="#d9d9d9"/>
<rect x="996" y="100" width="1" height="764" fill="#cdcdcd"/>
<rect x="1000" y="102.5" width="6" height="393" rx="3" fill="#a0a0a0"/>
<rect x="1009" y="100" width="5" height="764" fill="#e6e6e6"/>
<rect x="1014" y="100" width="1" height="764" fill="#a8a8a8"/>
<rect x="1015" y="100" width="3" height="764" fill="#f6f6f6"/>
<rect x="1015" y="100" width="3" height="18" fill="#c8c8c8"/>
<rect x="1015" y="455" width="3" height="34" fill="#ffffff"/>
<rect x="1015" y="456" width="1" height="32" fill="#b8b8b8"/>
<rect x="1015" y="489" width="3" height="6" fill="#e8e8e8"/>
<rect x="1015" y="495" width="3" height="1" fill="#acacac"/>
<rect x="1015" y="496" width="3" height="15" fill="#cacaca"/>
<rect x="1015" y="496" width="1" height="368" fill="#b0b0b0"/>
<rect x="1016" y="511" width="2" height="26" fill="#e95420"/>
<text x="218" y="130" style="font-family:'Liberation Sans',sans-serif;font-size:17px;letter-spacing:0.45px" fill="#ff7b7b">(%i1)</text>
<text x="263.8" y="128" style="font-family:'Liberation Sans',sans-serif;font-size:17px;letter-spacing:0.4px" xml:space="preserve"><tspan fill="#800000">f</tspan><tspan fill="#000000">(</tspan><tspan fill="#008000">x</tspan><tspan fill="#000000">):=(</tspan><tspan fill="#008000">x</tspan><tspan fill="#000000">−</tspan><tspan fill="#804000">2</tspan><tspan fill="#000000">)/(</tspan><tspan fill="#008000">x</tspan><tspan fill="#000000">+</tspan><tspan fill="#804000">2</tspan><tspan fill="#000000">)</tspan><tspan fill="#a0a0a0">;</tspan></text>
<text x="218" y="166.6" style="font-family:'Liberation Sans',sans-serif;font-size:13px;" fill="#ffb878">(%o1)</text>
<text x="263.7" y="169.4" style="font-family:'Liberation Sans',sans-serif;font-size:18px;" fill="#000000">f</text>
<text x="271.5" y="169.4" style="font-family:'Liberation Sans',sans-serif;font-size:18px;" fill="#000000">(</text>
<text x="279.4" y="169.4" style="font-family:'Liberation Sans',sans-serif;font-size:18px;font-style:italic" fill="#000000">x</text>
<text x="290.8" y="169.4" style="font-family:'Liberation Sans',sans-serif;font-size:18px;" fill="#000000">)</text>
<text x="297.7" y="169.4" style="font-family:'Liberation Sans',sans-serif;font-size:18px;" fill="#000000">:</text>
<text x="302.6" y="169.4" style="font-family:'Liberation Sans',sans-serif;font-size:18px;" fill="#000000">=</text>
<rect x="314" y="165" width="50" height="1.1" fill="#000"/>
<text x="322.5" y="157.8" style="font-family:'Liberation Sans',sans-serif;font-size:18px;font-style:italic" fill="#000000">x</text>
<text x="334" y="157.8" style="font-family:'Liberation Sans',sans-serif;font-size:18px;" fill="#000000">−</text>
<text x="346" y="157.8" style="font-family:'Liberation Sans',sans-serif;font-size:18px;" fill="#000000">2</text>
<text x="322.5" y="183.2" style="font-family:'Liberation Sans',sans-serif;font-size:18px;font-style:italic" fill="#000000">x</text>
<text x="334" y="183.2" style="font-family:'Liberation Sans',sans-serif;font-size:18px;" fill="#000000">+</text>
<text x="346" y="183.2" style="font-family:'Liberation Sans',sans-serif;font-size:18px;" fill="#000000">2</text>
<text x="218" y="228.3" style="font-family:'Liberation Sans',sans-serif;font-size:17px;letter-spacing:0.45px" fill="#ff7b7b">(%i2)</text>
<text x="263.8" y="227" style="font-family:'Liberation Sans',sans-serif;font-size:17px;letter-spacing:0.4px" xml:space="preserve"><tspan fill="#800000">limit</tspan><tspan fill="#000000">(</tspan><tspan fill="#800000">f</tspan><tspan fill="#000000">(</tspan><tspan fill="#008000">x</tspan><tspan fill="#000000">), </tspan><tspan fill="#008000">x</tspan><tspan fill="#000000">, </tspan><tspan fill="#000000">−</tspan><tspan fill="#804000">2</tspan><tspan fill="#000000">, </tspan><tspan fill="#008000">plus</tspan><tspan fill="#000000">)</tspan><tspan fill="#a0a0a0">;</tspan></text>
<text x="218" y="252" style="font-family:'Liberation Sans',sans-serif;font-size:13px;" fill="#ffb878">(%o2)</text>
<text x="264" y="254.3" style="font-family:'Liberation Sans',sans-serif;font-size:17px;" fill="#000000">−</text>
<text x="277.5" y="253" style="font-family:'Liberation Sans',sans-serif;font-size:16px;" fill="#000000">∞</text>
<text x="218" y="299" style="font-family:'Liberation Sans',sans-serif;font-size:17px;letter-spacing:0.45px" fill="#ff7b7b">(%i3)</text>
<text x="263.8" y="298" style="font-family:'Liberation Sans',sans-serif;font-size:17px;letter-spacing:0.4px" xml:space="preserve"><tspan fill="#800000">limit</tspan><tspan fill="#000000">(</tspan><tspan fill="#800000">f</tspan><tspan fill="#000000">(</tspan><tspan fill="#008000">x</tspan><tspan fill="#000000">), </tspan><tspan fill="#008000">x</tspan><tspan fill="#000000">, </tspan><tspan fill="#000000">−</tspan><tspan fill="#804000">2</tspan><tspan fill="#000000">, </tspan><tspan fill="#008000">minus</tspan><tspan fill="#000000">)</tspan><tspan fill="#a0a0a0">;</tspan></text>
<text x="218" y="322.6" style="font-family:'Liberation Sans',sans-serif;font-size:13px;" fill="#ffb878">(%o3)</text>
<text x="264.5" y="322.6" style="font-family:'Liberation Sans',sans-serif;font-size:16.5px;" fill="#000000">∞</text>
<path d="M206.6 864 V353.8 H216.5 L207 363.5 M206.6 379.5 H212.8" fill="none" stroke="#000" stroke-width="1.3"/>
<text x="218" y="370.9" style="font-family:'Liberation Sans',sans-serif;font-size:17px;letter-spacing:0.45px" fill="#ff7b7b">(%i9)</text>
<text x="263.8" y="369.2" style="font-family:'Liberation Sans',sans-serif;font-size:17px;letter-spacing:0.4px" xml:space="preserve"><tspan fill="#800000">wxplot2d</tspan><tspan fill="#000000">([</tspan><tspan fill="#800000">f</tspan><tspan fill="#000000">(</tspan><tspan fill="#008000">x</tspan><tspan fill="#000000">)], [</tspan><tspan fill="#008000">x</tspan><tspan fill="#000000">,</tspan><tspan fill="#000000">−</tspan><tspan fill="#804000">2.1</tspan><tspan fill="#000000">,</tspan><tspan fill="#000000">−</tspan><tspan fill="#804000">1.9</tspan><tspan fill="#000000">])</tspan><tspan fill="#a0a0a0">$</tspan></text>
<text x="265" y="396.8" style="font-family:'Liberation Sans',sans-serif;font-size:18px;" fill="#000000">plot2d: expression evaluates to non-numeric value somewhere in plotting range.</text>
<text x="218.5" y="657.8" style="font-family:'Liberation Sans',sans-serif;font-size:16px;" fill="#ffb878">(%t9)</text>
<rect x="342.5" y="449.5" width="498.0" height="373.0" fill="none" stroke="#000" stroke-width="1.1"/>
<text x="335.5" y="454.69999999999993" text-anchor="end" style="font-family:'Liberation Sans',sans-serif;font-size:13px;letter-spacing:0.3px" fill="#111">80000</text>
<text x="335.5" y="501.32499999999993" text-anchor="end" style="font-family:'Liberation Sans',sans-serif;font-size:13px;letter-spacing:0.3px" fill="#111">60000</text>
<path d="M342.5 496.4 h6 M840.5 496.4 h-6" stroke="#000" stroke-width="1"/>
<text x="335.5" y="547.9499999999999" text-anchor="end" style="font-family:'Liberation Sans',sans-serif;font-size:13px;letter-spacing:0.3px" fill="#111">40000</text>
<path d="M342.5 543.0 h6 M840.5 543.0 h-6" stroke="#000" stroke-width="1"/>
<text x="335.5" y="594.5749999999999" text-anchor="end" style="font-family:'Liberation Sans',sans-serif;font-size:13px;letter-spacing:0.3px" fill="#111">20000</text>
<path d="M342.5 589.7 h6 M840.5 589.7 h-6" stroke="#000" stroke-width="1"/>
<text x="335.5" y="641.1999999999999" text-anchor="end" style="font-family:'Liberation Sans',sans-serif;font-size:13px;letter-spacing:0.3px" fill="#111">0</text>
<path d="M342.5 636.3 h6 M840.5 636.3 h-6" stroke="#000" stroke-width="1"/>
<text x="335.5" y="687.8249999999999" text-anchor="end" style="font-family:'Liberation Sans',sans-serif;font-size:13px;letter-spacing:0.3px" fill="#111">-20000</text>
<path d="M342.5 682.9 h6 M840.5 682.9 h-6" stroke="#000" stroke-width="1"/>
<text x="335.5" y="734.4499999999999" text-anchor="end" style="font-family:'Liberation Sans',sans-serif;font-size:13px;letter-spacing:0.3px" fill="#111">-40000</text>
<path d="M342.5 729.5 h6 M840.5 729.5 h-6" stroke="#000" stroke-width="1"/>
<text x="335.5" y="781.0749999999999" text-anchor="end" style="font-family:'Liberation Sans',sans-serif;font-size:13px;letter-spacing:0.3px" fill="#111">-60000</text>
<path d="M342.5 776.2 h6 M840.5 776.2 h-6" stroke="#000" stroke-width="1"/>
<text x="335.5" y="827.6999999999999" text-anchor="end" style="font-family:'Liberation Sans',sans-serif;font-size:13px;letter-spacing:0.3px" fill="#111">-80000</text>
<text x="342.5" y="843.8" text-anchor="middle" style="font-family:'Liberation Sans',sans-serif;font-size:13px" fill="#111">-2.1</text>
<text x="467.0" y="843.8" text-anchor="middle" style="font-family:'Liberation Sans',sans-serif;font-size:13px" fill="#111">-2.05</text>
<path d="M467.0 449.5 v6 M467.0 822.5 v-6" stroke="#000" stroke-width="1"/>
<text x="591.5" y="843.8" text-anchor="middle" style="font-family:'Liberation Sans',sans-serif;font-size:13px" fill="#111">-2</text>
<path d="M591.5 449.5 v6 M591.5 822.5 v-6" stroke="#000" stroke-width="1"/>
<text x="716.0" y="843.8" text-anchor="middle" style="font-family:'Liberation Sans',sans-serif;font-size:13px" fill="#111">-1.95</text>
<path d="M716.0 449.5 v6 M716.0 822.5 v-6" stroke="#000" stroke-width="1"/>
<text x="840.5" y="843.8" text-anchor="middle" style="font-family:'Liberation Sans',sans-serif;font-size:13px" fill="#111">-1.9</text>
<path d="M342.5 636.3 H840.5" stroke="#555" stroke-width="1" stroke-dasharray="1 3.5"/>
<path d="M342.50 635.30 L341.20 635.21 L345.20 635.21 L349.20 635.20 L353.20 635.20 L357.20 635.20 L361.20 635.20 L365.20 635.20 L369.20 635.20 L373.20 635.19 L377.20 635.19 L381.20 635.19 L385.20 635.19 L389.20 635.19 L393.20 635.18 L397.20 635.18 L401.20 635.18 L405.20 635.18 L409.20 635.17 L413.20 635.17 L417.20 635.17 L421.20 635.16 L425.20 635.16 L429.20 635.16 L433.20 635.15 L437.20 635.15 L441.20 635.15 L445.20 635.14 L449.20 635.14 L453.20 635.13 L457.20 635.13 L461.20 635.12 L465.20 635.12 L469.20 635.11 L473.20 635.10 L477.20 635.10 L481.20 635.09 L485.20 635.08 L489.20 635.07 L493.20 635.06 L497.20 635.05 L501.20 635.04 L505.20 635.03 L509.20 635.02 L513.20 635.00 L517.20 634.99 L521.20 634.97 L525.20 634.95 L529.20 634.93 L533.20 634.90 L537.20 634.87 L541.20 634.84 L545.20 634.80 L549.20 634.75 L553.20 634.69 L557.20 634.62 L561.20 634.53 L565.20 634.41 L569.20 634.25 L573.20 634.01 L577.20 633.64 L581.20 632.98 L583.20 632.40 L585.20 631.43 L586.20 630.66 L587.20 629.50 L587.70 628.67 L588.20 627.57 L588.70 626.02 L589.20 623.70 L589.50 621.65 L589.80 618.73 L590.00 615.97 L590.20 612.10 L590.40 606.30 L590.55 599.61 L590.70 588.90 L590.80 577.30 L590.88 562.80 L590.95 542.50 L591.00 519.30 L591.04 490.30 L591.07 463.45" fill="none" stroke="#3333ff" stroke-width="1.3"/>
<path d="M840.50 636.30 L840.60 636.39 L836.60 636.39 L832.60 636.40 L828.60 636.40 L824.60 636.40 L820.60 636.40 L816.60 636.40 L812.60 636.40 L808.60 636.41 L804.60 636.41 L800.60 636.41 L796.60 636.41 L792.60 636.42 L788.60 636.42 L784.60 636.42 L780.60 636.42 L776.60 636.43 L772.60 636.43 L768.60 636.43 L764.60 636.43 L760.60 636.44 L756.60 636.44 L752.60 636.44 L748.60 636.45 L744.60 636.45 L740.60 636.46 L736.60 636.46 L732.60 636.46 L728.60 636.47 L724.60 636.47 L720.60 636.48 L716.60 636.49 L712.60 636.49 L708.60 636.50 L704.60 636.51 L700.60 636.51 L696.60 636.52 L692.60 636.53 L688.60 636.54 L684.60 636.55 L680.60 636.56 L676.60 636.57 L672.60 636.59 L668.60 636.60 L664.60 636.62 L660.60 636.64 L656.60 636.66 L652.60 636.68 L648.60 636.71 L644.60 636.74 L640.60 636.77 L636.60 636.82 L632.60 636.87 L628.60 636.93 L624.60 637.00 L620.60 637.10 L616.60 637.23 L612.60 637.40 L608.60 637.66 L604.60 638.08 L601.60 638.62 L599.60 639.20 L597.60 640.17 L596.60 640.94 L595.60 642.10 L595.10 642.93 L594.60 644.03 L594.10 645.58 L593.60 647.90 L593.30 649.95 L593.00 652.87 L592.80 655.63 L592.60 659.50 L592.40 665.30 L592.25 671.99 L592.10 682.70 L592.00 694.30 L591.92 708.80 L591.85 729.10 L591.80 752.30 L591.76 781.30 L591.74 808.00" fill="none" stroke="#3333ff" stroke-width="1.3"/>
<text transform="translate(282 635.7) rotate(-90)" text-anchor="middle" style="font-family:'Liberation Sans',sans-serif;font-size:13px" fill="#111">(x-2)/(x+2)</text>
<text x="591" y="868" text-anchor="middle" style="font-family:'Liberation Sans',sans-serif;font-size:13px" fill="#111">x</text>
</svg></body></html>
